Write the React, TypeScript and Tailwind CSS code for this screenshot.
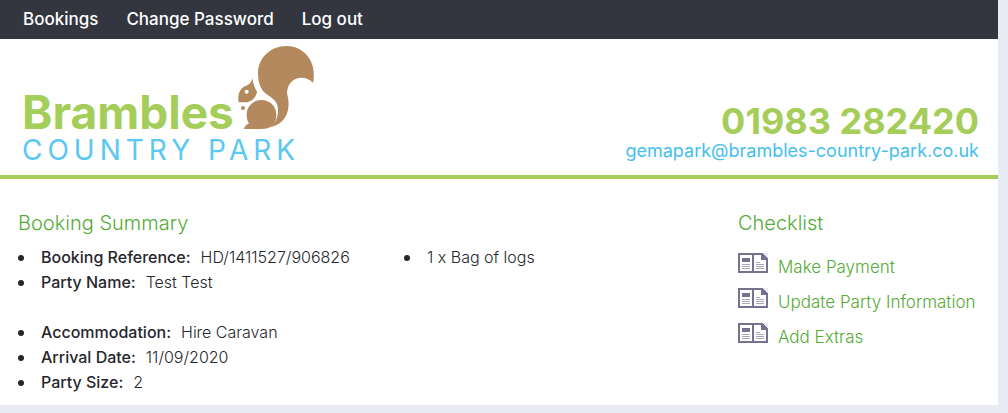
const navLinks = ["Bookings", "Change Password", "Log out"];

const partyDetails = [
  { label: "Booking Reference:", value: "HD/1411527/906826" },
  { label: "Party Name:", value: "Test Test" },
];

const stayDetails = [
  { label: "Accommodation:", value: "Hire Caravan" },
  { label: "Arrival Date:", value: "11/09/2020" },
  { label: "Party Size:", value: "2" },
];

const checklist = ["Make Payment", "Update Party Information", "Add Extras"];

const bullet =
  "flex items-center before:mr-[17px] before:size-[6px] before:shrink-0 before:rounded-full before:bg-[#26272d]";

function Squirrel() {
  return (
    <svg
      viewBox="39 18 228 252"
      className="h-[84px] w-[76px] shrink-0"
      fill="#b3895d"
      aria-hidden="true"
    >
      <path d="M264 129C268 111 267 88 261 72C249 39 220 18 184 18C137 18 99 54 99 99C99 126 106 146 121 160C138 173 158 181 159 208C160 231 151 250 135 262C165 256 181 237 187 217C191 204 192 188 189 173C187 164 185 159 187 150C191 128 207 114 229 113C244 113 256 119 264 129Z" />
      <path d="M109 180C136 180 154 200 154 224C154 243 146 255 132 263C123 266 112 267 100 267H57C58 259 64 255 72 250C67 243 65 234 65 224C65 200 84 180 109 180Z" />
      <path
        fillRule="evenodd"
        d="M83 115C83 132 90 143 96 155C94 173 77 187 59 187C52 187 46 186 41 187C37 167 43 145 62 138C73 135 79 127 83 115ZM65 149A6 6 0 1 0 65 161A6 6 0 1 0 65 149Z"
      />
      <circle cx="54" cy="204" r="6" />
    </svg>
  );
}

function LeafletIcon() {
  return (
    <svg
      viewBox="0 0 30 20"
      className="h-5 w-[30px] shrink-0"
      shapeRendering="crispEdges"
      aria-hidden="true"
    >
      <path fill="#e8ebf4" d="M24 0H30V6Z" />
      <path
        fill="#74728f"
        fillRule="evenodd"
        d="M0 0H24L30 6V20H0ZM2 2V18H14V2ZM16 2V18H28V7H23V2Z"
      />
      <path fill="#74728f" d="M4 5H12V9H4Z" />
      <path
        fill="#aaa9bc"
        d="M4 11H12V12H4ZM4 13H12V14H4ZM4 15H12V16H4ZM18 9H22V10H18ZM18 11H26V12H18ZM18 13H26V14H18ZM18 15H26V16H18Z"
      />
    </svg>
  );
}

function Details({ items }: { items: { label: string; value: string }[] }) {
  return (
    <ul>
      {items.map((item) => (
        <li key={item.label} className={bullet}>
          <span className="mr-[10px] font-medium">{item.label}</span>
          {item.value}
        </li>
      ))}
    </ul>
  );
}

export default function App() {
  return (
    <div className="min-h-screen bg-[#e8ebf4] pr-[10px] pb-2 font-['Inter',sans-serif] text-base font-light text-[#26272d]">
      <nav className="flex h-[39px] items-center gap-7 bg-[#33363f] px-[23px] pb-[2px] text-[17px] font-medium text-white">
        {navLinks.map((link) => (
          <a key={link} href="#" className="leading-6">
            {link}
          </a>
        ))}
      </nav>

      <header className="flex items-start justify-between border-b-4 border-[#a5cd5a] bg-white pt-[7px] pr-[19px] pb-[9px] pl-[22px]">
        <a href="#" className="block">
          <span className="flex items-end gap-1">
            <span className="text-[46px] leading-9 font-bold text-[#a5cd5a]">
              Brambles
            </span>
            <Squirrel />
          </span>
          <span className="block pt-1 text-[28px] leading-8 font-normal tracking-[5px] text-[#5bc8f3]">
            COUNTRY PARK
          </span>
        </a>
        <div className="flex flex-col items-end pt-[57px]">
          <a
            href="tel:01983282420"
            className="text-4xl leading-9 font-bold text-[#a5cd5a]"
          >
            01983 282420
          </a>
          <a
            href="mailto:gemapark@brambles-country-park.co.uk"
            className="text-lg leading-6 font-normal text-[#45c0f0]"
          >
            gemapark@brambles-country-park.co.uk
          </a>
        </div>
      </header>

      <main className="flex bg-white px-[18px] pt-[30px] pb-[10px]">
        <section className="grow">
          <h2 className="text-xl leading-7 text-[#55ab36]">Booking Summary</h2>
          <div className="flex pt-2 leading-[25px]">
            <div className="flex w-[386px] flex-col gap-[25px]">
              <Details items={partyDetails} />
              <Details items={stayDetails} />
            </div>
            <ul>
              <li className={bullet}>1 x Bag of logs</li>
            </ul>
          </div>
        </section>
        <section className="w-[242px] shrink-0 text-[#55ab36]">
          <h2 className="text-xl leading-7">Checklist</h2>
          <ul className="flex flex-col gap-[6px] pt-4 text-[17px] leading-[29px]">
            {checklist.map((item) => (
              <li key={item}>
                <a href="#" className="flex gap-[10px]">
                  <LeafletIcon />
                  {item}
                </a>
              </li>
            ))}
          </ul>
        </section>
      </main>
    </div>
  );
}
